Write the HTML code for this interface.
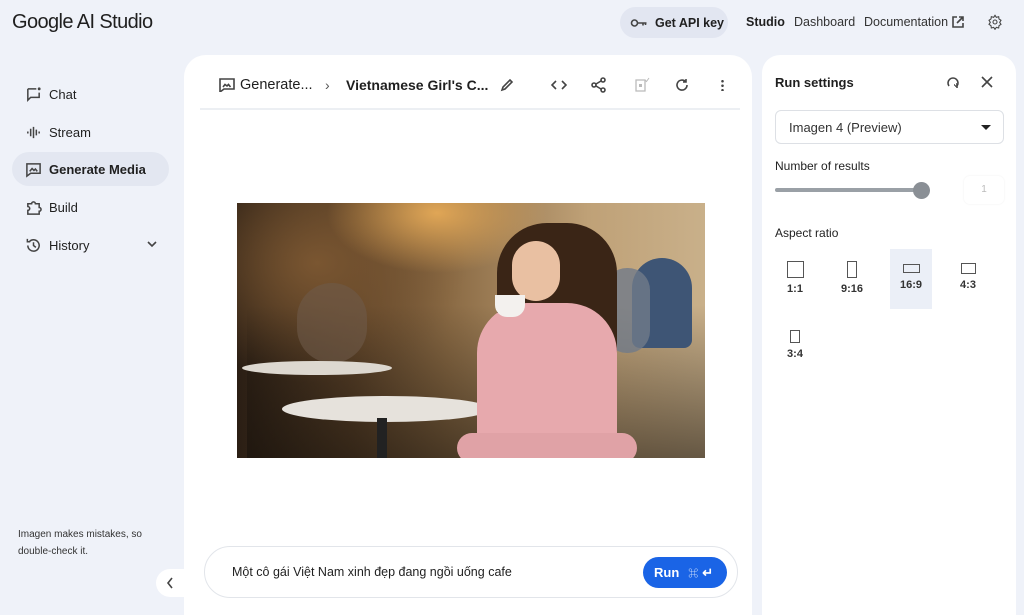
<!DOCTYPE html>
<html><head><meta charset="utf-8"><style>
*{margin:0;padding:0;box-sizing:border-box}
body{width:1024px;height:609px;overflow:hidden;background:#eff2f9;font-family:"Liberation Sans","Noto Sans CJK SC",sans-serif;color:#1f1f1f;position:relative}
.abs{position:absolute}
.logo{left:12px;top:11px;font-size:20px;letter-spacing:-0.6px;color:#1f1f1f}
.nav{left:12px;width:157px;height:34px;border-radius:17px;font-size:13px;display:flex;align-items:center;padding-left:13px;gap:7px;color:#1f1f1f}
.nav.act{background:#e3e7f1;font-weight:bold}
.nav svg{width:17px;height:17px}
.top{font-size:12.5px}
.main{left:184px;top:55px;width:568px;height:560px;background:#fff;border-radius:22px 22px 0 0}
.right{left:762px;top:55px;width:254px;height:560px;background:#fff;border-radius:18px 18px 0 0}
.ic{stroke:#444;fill:none;stroke-width:1.6}
.ar{width:42px;height:60px;display:flex;flex-direction:column;align-items:center;font-size:11px;font-weight:bold;color:#333;position:absolute}
.ar div{border:1.6px solid #555;margin-top:12px;margin-bottom:5px}
</style></head><body>
<div class="abs logo">Google AI Studio</div>

<div class="abs" style="left:620px;top:7px;width:108px;height:31px;border-radius:16px;background:#e2e6f1;font-size:12.5px;font-weight:bold;display:flex;align-items:center;padding-left:10px;gap:7px">
<svg width="18" height="12" viewBox="0 0 18 12"><circle cx="4.5" cy="6" r="3" class="ic"/><path d="M7.5 6h9M13 6v2.5M15.5 6v2" class="ic"/></svg>Get API key</div>
<div class="abs top" style="left:746px;top:15px;font-weight:bold">Studio</div>
<div class="abs top" style="left:794px;top:15px;color:#333">Dashboard</div>
<div class="abs top" style="left:864px;top:15px;color:#333">Documentation</div>
<svg class="abs" style="left:952px;top:16px" width="12" height="12" viewBox="0 0 12 12"><path d="M5 1H1v10h10V7M7 1h4v4M11 1L5 7" class="ic" stroke-width="1.2"/></svg>
<svg class="abs" style="left:987px;top:14px" width="16" height="16" viewBox="0 0 24 24"><circle cx="12" cy="12" r="3" class="ic" stroke-width="2"/><path d="M12 2l2 3 3.5-1 .5 3.5 3 2-2 3 2 3-3 2-.5 3.5-3.5-1-2 3-2-3-3.5 1-.5-3.5-3-2 2-3-2-3 3-2 .5-3.5 3.5 1z" class="ic" stroke-width="1.8"/></svg>

<div class="abs nav" style="top:77px"><svg viewBox="0 0 18 18"><path d="M3 3h9M3 3v12l3-3h9V7" class="ic"/><circle cx="15" cy="3" r="1.5" fill="#444"/></svg>Chat</div>
<div class="abs nav" style="top:115px"><svg viewBox="0 0 18 18"><path d="M3 8v2M6 5v8M9 3v12M12 6v6M15 8v2" class="ic" stroke-width="1.3"/></svg>Stream</div>
<div class="abs nav act" style="top:152px"><svg viewBox="0 0 18 18"><path d="M2 3h14v10H6l-4 3z" class="ic"/><path d="M5 11l2.5-3 2 2 1.5-1.5 2 2.5" class="ic" stroke-width="1.2"/></svg>Generate Media</div>
<div class="abs nav" style="top:190px"><svg viewBox="0 0 18 18"><path d="M3 5h4a2 2 0 1 1 4 0h4v4a2 2 0 1 1 0 4v3H3v-4a2 2 0 1 0 0-4z" class="ic" stroke-width="1.4"/></svg>Build</div>
<div class="abs nav" style="top:228px"><svg viewBox="0 0 18 18"><path d="M3 9a6 6 0 1 0 2-4.5M2.5 2v3h3M9 5.5V9l2.5 2" class="ic"/></svg>History</div>
<svg class="abs" style="left:147px;top:241px" width="10" height="7" viewBox="0 0 10 7"><path d="M1 1l4 4 4-4" class="ic" stroke-width="1.4"/></svg>

<div class="abs" style="left:18px;top:526px;font-size:10px;line-height:17px;color:#333">Imagen makes mistakes, so<br>double-check it.</div>
<div class="abs" style="left:156px;top:569px;width:34px;height:28px;background:#fff;border-radius:14px 0 0 14px"></div>
<svg class="abs" style="left:166px;top:577px" width="8" height="12" viewBox="0 0 8 12"><path d="M6 1L2 6l4 5" class="ic" stroke-width="1.4"/></svg>

<div class="abs main"></div>
<svg class="abs" style="left:219px;top:78px" width="16" height="14" viewBox="0 0 16 14"><path d="M1 1h14v10H5l-4 3z" class="ic" stroke-width="1.4"/><path d="M4 9l2-2.5 2 1.5 1.5-1.5 2 2.5" class="ic" stroke-width="1.1"/></svg>
<div class="abs" style="left:240px;top:77px;font-size:14.5px">Generate...</div>
<div class="abs" style="left:325px;top:77px;font-size:14px;color:#555">›</div>
<div class="abs" style="left:346px;top:77px;font-size:14px;font-weight:bold">Vietnamese Girl's C...</div>
<svg class="abs" style="left:500px;top:78px" width="14" height="14" viewBox="0 0 14 14"><path d="M2 12l1-3 7-7 2 2-7 7z" class="ic" stroke-width="1.3"/></svg>
<svg class="abs" style="left:551px;top:80px" width="16" height="10" viewBox="0 0 16 10"><path d="M5 1L1 5l4 4M11 1l4 4-4 4" class="ic" stroke-width="1.4"/></svg>
<svg class="abs" style="left:591px;top:77px" width="16" height="16" viewBox="0 0 16 16"><circle cx="12" cy="3" r="2" class="ic" stroke-width="1.3"/><circle cx="3" cy="8" r="2" class="ic" stroke-width="1.3"/><circle cx="12" cy="13" r="2" class="ic" stroke-width="1.3"/><path d="M5 7l5-3M5 9l5 3" class="ic" stroke-width="1.3"/></svg>
<svg class="abs" style="left:634px;top:77px" width="16" height="16" viewBox="0 0 16 16"><path d="M2 3h9v11H2z" stroke="#bbb" fill="none" stroke-width="1.3"/><rect x="5" y="7" width="3" height="3" fill="#bbb"/><path d="M11 3l1.5 1.5L15 1" stroke="#bbb" fill="none"/></svg>
<svg class="abs" style="left:675px;top:78px" width="14" height="14" viewBox="0 0 14 14"><path d="M12 7a5 5 0 1 1-1.5-3.5M11 1v3H8" class="ic" stroke-width="1.4"/></svg>
<div class="abs" style="left:721px;top:79px;width:3px;height:12px;background:radial-gradient(circle,#444 1.2px,transparent 1.4px) 0 0/3px 4.5px"></div>
<div class="abs" style="left:200px;top:108px;width:540px;height:2px;background:#eceff3"></div>

<div class="abs" style="left:237px;top:203px;width:468px;height:255px;overflow:hidden;background:radial-gradient(ellipse 110px 60px at 200px 10px,#e0a656,transparent),radial-gradient(ellipse 150px 120px at 80px 60px,#7a5631,transparent),linear-gradient(90deg,#2a1e14 0%,#5a4128 25%,#8a6a44 45%,#bfa177 75%,#c9b08a 100%)">
<div class="abs" style="left:10px;top:0;width:458px;height:255px;background:linear-gradient(180deg,transparent 40%,rgba(20,15,10,.55) 100%)"></div>
<div class="abs" style="left:395px;top:55px;width:60px;height:90px;border-radius:30px 30px 8px 8px;background:#3e5575"></div>
<div class="abs" style="left:368px;top:65px;width:45px;height:85px;border-radius:22px;background:#707b8a;opacity:.8"></div>
<div class="abs" style="left:60px;top:80px;width:70px;height:80px;border-radius:35px;background:#6e5a4a;opacity:.6"></div>
<div class="abs" style="left:5px;top:158px;width:150px;height:14px;border-radius:50%;background:#ddd8d0"></div>
<div class="abs" style="left:45px;top:193px;width:208px;height:26px;border-radius:50%;background:#e6e2dc"></div>
<div class="abs" style="left:140px;top:215px;width:10px;height:40px;background:#222"></div>
<div class="abs" style="left:260px;top:20px;width:120px;height:200px;border-radius:50px 50px 20px 20px;background:#3a2516"></div>
<div class="abs" style="left:275px;top:38px;width:48px;height:60px;border-radius:24px;background:#e9c0a2"></div>
<div class="abs" style="left:240px;top:100px;width:140px;height:155px;border-radius:50px 50px 10px 10px;background:#e7a9ad"></div>
<div class="abs" style="left:220px;top:230px;width:180px;height:30px;border-radius:20px;background:#e0a2a6"></div>
<div class="abs" style="left:258px;top:92px;width:30px;height:22px;border-radius:0 0 12px 12px;background:#f3f1ee"></div>
</div>

<div class="abs" style="left:204px;top:546px;width:534px;height:52px;border:1px solid #e2e5ea;border-radius:26px;background:#fff"></div>
<div class="abs" style="left:232px;top:565px;font-size:12.5px;color:#1f1f1f">Một cô gái Việt Nam xinh đẹp đang ngồi uống cafe</div>
<div class="abs" style="left:643px;top:557px;width:84px;height:31px;border-radius:16px;background:#1a64e6;color:#fff;font-size:13px;font-weight:bold;display:flex;align-items:center;padding-left:11px;gap:9px">Run <span style="font-size:10px;font-weight:normal;opacity:.85">⌘</span><span style="margin-left:-5px">↵</span></div>

<div class="abs right"></div>
<div class="abs" style="left:775px;top:75px;font-size:13px;font-weight:bold">Run settings</div>
<svg class="abs" style="left:946px;top:75px" width="14" height="14" viewBox="0 0 14 14"><path d="M3 11a5 5 0 1 1 8 0M9 11h2v2" class="ic" stroke-width="1.3"/><path d="M8 10h1M10 9h1" class="ic"/></svg>
<svg class="abs" style="left:981px;top:76px" width="12" height="12" viewBox="0 0 12 12"><path d="M1 1l10 10M11 1L1 11" class="ic" stroke-width="1.4"/></svg>
<div class="abs" style="left:775px;top:110px;width:229px;height:34px;border:1px solid #dde0e5;border-radius:6px;font-size:13px;padding:9px 0 0 13px;color:#333">Imagen 4 (Preview)</div>
<div class="abs" style="left:981px;top:125px;border:5px solid transparent;border-top:5px solid #222;border-bottom:0"></div>
<div class="abs" style="left:775px;top:159px;font-size:12px;color:#222">Number of results</div>
<div class="abs" style="left:775px;top:188px;width:146px;height:4px;border-radius:2px;background:#9aa0a6"></div>
<div class="abs" style="left:913px;top:182px;width:17px;height:17px;border-radius:50%;background:#8a8f95"></div>
<div class="abs" style="left:964px;top:176px;width:40px;height:28px;border-radius:6px;box-shadow:0 0 2px #eee;font-size:10px;color:#bbb;text-align:center;line-height:28px">1</div>
<div class="abs" style="left:775px;top:226px;font-size:12px;color:#222">Aspect ratio</div>
<div class="ar" style="left:774px;top:249px"><div style="width:17px;height:17px"></div>1:1</div>
<div class="ar" style="left:831px;top:249px"><div style="width:10px;height:17px"></div>9:16</div>
<div class="ar" style="left:890px;top:249px;background:#ebeff7"><div style="width:17px;height:9px;margin-top:15px;margin-bottom:6px"></div>16:9</div>
<div class="ar" style="left:947px;top:249px"><div style="width:15px;height:11px;margin-top:14px;margin-bottom:5px"></div>4:3</div>
<div class="ar" style="left:774px;top:318px"><div style="width:10px;height:13px"></div>3:4</div>
</body></html>
